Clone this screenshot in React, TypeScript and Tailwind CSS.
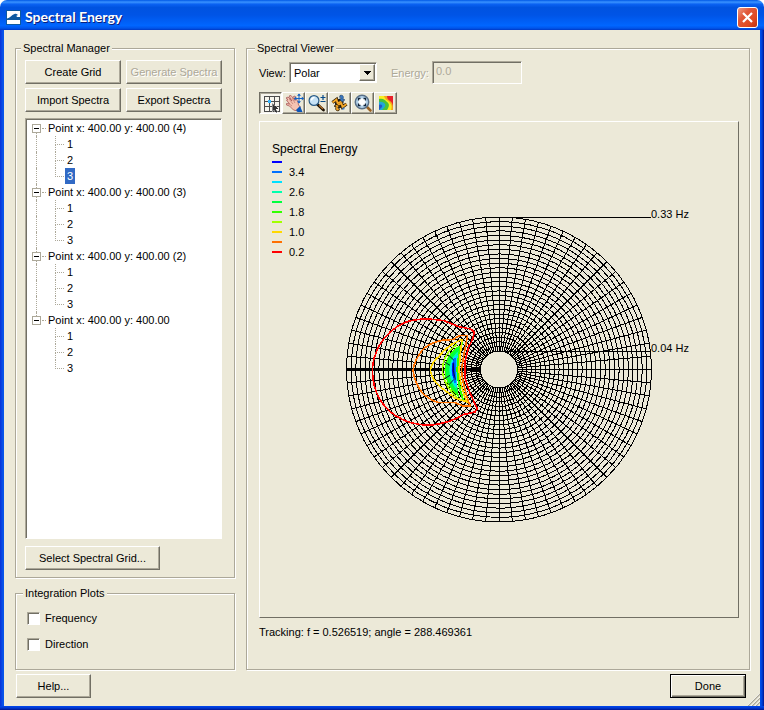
import React, { useState } from "react";

const buttonClass =
  "h-6 border border-t-white border-l-white border-r-[#716f64] border-b-[#716f64] bg-[#ece9d8] shadow-[inset_-1px_-1px_0_#aca899] text-[11px] leading-4 text-black";

const groupClass =
  "min-w-0 border border-[#aca899] shadow-[1px_1px_0_#fff,inset_1px_1px_0_#fff]";

const legendClass = "-ml-1 h-4 bg-[#ece9d8] px-0.5 text-[11px] leading-4";

const sunkenClass =
  "border border-t-[#aca899] border-l-[#aca899] border-r-white border-b-white shadow-[inset_1px_1px_0_#716f64]";

const toolClass =
  "flex h-[22px] w-[23px] items-center justify-center border";

/* ---------- Tree ---------- */

const points = [
  "Point x: 400.00 y: 400.00 (4)",
  "Point x: 400.00 y: 400.00 (3)",
  "Point x: 400.00 y: 400.00 (2)",
  "Point x: 400.00 y: 400.00",
];

function SpectraTree() {
  const [selected, setSelected] = useState("0-3");
  return (
    <ul className={`flex-1 bg-white p-px pb-2 text-[11px] leading-4 ${sunkenClass}`}>
      {points.map((label, i) => {
        const lastPoint = i === points.length - 1;
        return (
          <li key={label}>
            <div className="flex h-4 items-center pl-[5px]">
              <span className="flex h-4 w-[9px] flex-col items-center">
                <span className={`h-1 border-l border-dotted ${i === 0 ? "border-transparent" : "border-[#aca899]"}`} />
                <button
                  aria-label={`Collapse ${label}`}
                  className="flex size-[9px] items-center justify-center border border-[#aca899] bg-white"
                >
                  <span className="h-px w-[5px] bg-black" />
                </button>
                <span className={`h-[3px] border-l border-dotted ${lastPoint ? "border-transparent" : "border-[#aca899]"}`} />
              </span>
              <span className="mr-0.5 ml-px w-1 border-t border-dotted border-[#aca899]" />
              <span className="whitespace-nowrap">{label}</span>
            </div>
            <ul>
              {[1, 2, 3].map((n) => {
                const key = `${i}-${n}`;
                return (
                  <li key={key} className="flex h-4 pl-[9px]">
                    <span className={`w-[19px] border-l border-dotted ${lastPoint ? "border-transparent" : "border-[#aca899]"}`} />
                    <span className="mr-px flex w-[9px] flex-col">
                      <span className="h-[9px] border-b border-l border-dotted border-[#aca899]" />
                      {n < 3 && <span className="h-[7px] border-l border-dotted border-[#aca899]" />}
                    </span>
                    <button
                      onClick={() => setSelected(key)}
                      className={`h-4 px-0.5 leading-4 ${selected === key ? "bg-[#316ac5] text-white" : "text-black"}`}
                    >
                      {n}
                    </button>
                  </li>
                );
              })}
            </ul>
          </li>
        );
      })}
    </ul>
  );
}

/* ---------- Tool icons ---------- */

function GridIcon() {
  return (
    <svg viewBox="0 0 20 20" className="size-5" shapeRendering="crispEdges">
      <path d="M3.500 3v15M8.500 3v15M13.500 3v15M18.500 3v15M3 3.500h16M3 8.500h16M3 13.500h16M3 18.500h16" stroke="#4c4c4c" fill="none" />
      <rect x="7" y="7" width="3" height="3" fill="#38b6ff" />
      <path d="M11 10l7 6h-3l2 3-2 1-2-3-2 2z" fill="#333" stroke="#fff" strokeWidth=".4" />
    </svg>
  );
}

function PanIcon() {
  return (
    <svg viewBox="0 0 20 20" className="size-5">
      <path d="M2 5l2-1 4 4-3-5 2-.5 4 5-1.500-4 1.500-.5 3 6 .5 3 2 2-3 4-4-1-4-4-3-1v-1.500l3 .5-3-4 1.500-.5z" fill="#f6c3b2" stroke="#a85858" strokeWidth=".8" />
      <path d="M5 6l4 5M8 5l3 5M4 10l4 3" stroke="#c07a70" strokeWidth=".7" />
      <path d="M12 17l4-4 2.500 6h-5z" fill="#0a54b8" />
      <path d="M15 1v9M10.500 5.500h9" stroke="#1463c4" strokeWidth="1" />
      <path d="M15 0.500l2 2.200h-4zM15 10.500l2-2.200h-4zM10 5.500l2.200-2v4zM20 5.500l-2.200-2v4z" fill="#1463c4" />
    </svg>
  );
}

function ZoomIcon() {
  return (
    <svg viewBox="0 0 20 20" className="size-5">
      <path d="M10.500 11.500l6 5.500" stroke="#1d1205" strokeWidth="2.800" strokeLinecap="round" />
      <path d="M12 12.200l4 3.800" stroke="#b9722a" strokeWidth="1.200" />
      <circle cx="7" cy="7.500" r="4.900" fill="#c6e2f6" stroke="#2a5a85" strokeWidth="1.200" />
      <path d="M4.500 7.500a3 3 0 0 1 3-3" stroke="#fff" strokeWidth="1.600" fill="none" />
      <path d="M13.500 4.500h5M16 2v5M13.500 8.500h5" stroke="#064a8c" strokeWidth="1.200" />
    </svg>
  );
}

function RotateIcon() {
  return (
    <svg viewBox="0 0 20 20" className="size-5">
      <circle cx="9.500" cy="10.500" r="4.500" fill="#111" />
      <path d="M6 9l4 4M10 7l4 4" stroke="#e7e2d0" strokeWidth="1.200" />
      <path d="M2.500 9.500l4-3 1 3.500 4-1.500M16.500 11l-4 3-1-3.500-4 1.500" stroke="#2b1b04" strokeWidth="3.400" fill="none" />
      <path d="M2.500 9.500l4-3 1 3.500 4-1.500M16.500 11l-4 3-1-3.500-4 1.500" stroke="#f7a928" strokeWidth="1.800" fill="none" />
      <path d="M10 2.500c3-1 4 1 3 4l2 .3-3 2-2.500-3H11c0-1 0-1.500-1.500-1.500z" fill="#3c78c0" stroke="#123763" strokeWidth=".6" />
      <path d="M9 17.500c-3 1-4-1-3-4l-2-.3 3-2 2.500 3H8c0 1 0 1.500 1.500 1.500z" fill="#f7a928" stroke="#2b1b04" strokeWidth=".8" />
      <path d="M12 17l3-1-2-2z" fill="#3c78c0" />
    </svg>
  );
}

function FrameIcon() {
  return (
    <svg viewBox="0 0 20 20" className="size-5">
      <path d="M13.500 13.500l4 4" stroke="#9a6224" strokeWidth="2.600" strokeLinecap="round" />
      <circle cx="9" cy="9" r="6.700" fill="#b4d2ea" stroke="#5a7088" strokeWidth="1.500" />
      <rect x="5.500" y="5.500" width="7" height="7" fill="#fff" />
      <path d="M5.500 7.500v-2h2M10.500 5.500h2v2M12.500 10.500v2h-2M7.500 12.500h-2v-2" stroke="#12263c" strokeWidth="1.300" fill="none" />
    </svg>
  );
}

function ContourIcon() {
  return (
    <svg viewBox="0 0 20 20" className="size-5">
      <rect x="3" y="3" width="14" height="14" fill="#f8ee20" />
      <path d="M8 3h9v14h-2c1-3 1-5-1-7-2-3-5-3-6-7z" fill="#f2a51c" />
      <path d="M11 3h6v12c0-4-1-6-3-7s-3-3-3-5z" fill="#e8202a" />
      <path d="M3 6c4-1 6 1 8 3 3 2 2 5 0 8H3z" fill="#49c13a" />
      <path d="M3 9c3-1 5 1 6 2 1 2-1 4-3 6H3z" fill="#21a7d8" />
      <path d="M3 12c2-1 4 0 3 2l-3 3z" fill="#2657c4" />
    </svg>
  );
}

const tools: [string, () => React.JSX.Element][] = [
  ["Select grid point", GridIcon],
  ["Pan", PanIcon],
  ["Zoom", ZoomIcon],
  ["Rotate", RotateIcon],
  ["Frame", FrameIcon],
  ["Contours", ContourIcon],
];

/* ---------- Polar plot ---------- */

const levels = ["#0000ff", "#0070ff", "#00e0ff", "#00ffae", "#00ff3e", "#32ff00", "#a2ff00", "#ffd800", "#ff7000", "#ff0000"];
const levelLabels = ["3.4", "2.6", "1.8", "1.0", "0.2"];

const CX = 499;
const CY = 369.5;
const INNER = 18.5;
const OUTER = 152.5;

const rings = Array.from({ length: 30 }, (_, i) => INNER + ((OUTER - INNER) * i) / 29);
const spokes = Array.from({ length: 72 }, (_, i) => {
  const a = (i * 5 * Math.PI) / 180;
  const c = Math.cos(a);
  const s = Math.sin(a);
  return `M${CX + INNER * c} ${CY + INNER * s}L${CX + OUTER * c} ${CY + OUTER * s}`;
}).join("");

function PolarPlot() {
  return (
    <svg
      viewBox="260 122 478 495"
      className="min-h-0 w-full flex-1"
      fontFamily='"Liberation Sans", Arial, sans-serif'
      role="img"
      aria-label="Polar plot of spectral energy"
    >
      <text x="272" y="153" fontSize="12">Spectral Energy</text>
      {levels.map((c, i) => (
        <rect key={c} x="272" y={161 + i * 10} width="10" height="2" fill={c} />
      ))}
      {levelLabels.map((t, i) => (
        <text key={t} x="289" y={176 + i * 20} fontSize="11">{t}</text>
      ))}
      <g fill="none" stroke="#000" strokeWidth="1" shapeRendering="crispEdges">
        {rings.map((r) => (
          <circle key={r} cx={CX} cy={CY} r={r} />
        ))}
        <path d={spokes} />
        <path d="M499 217.500H651M499 351.500H651" />
        <path d="M347 369.500H480" strokeWidth="3" />
      </g>
      <g transform="translate(360 310) scale(.33333)" fill="none" strokeLinejoin="round" shapeRendering="crispEdges">
        <path d="M290 104Q250 130 247 180Q251 230 298 268" stroke="#a2ff00" strokeWidth="5" />
        <path d="M292 112Q257 140 255 181Q258 228 295 258Q283 215 285 180T301 110Z" fill="#00ff3e" stroke="#32ff00" strokeWidth="4" />
        <path d="M289 127Q266 150 266 182Q268 222 293 243Q284 212 285 180T299 121Z" fill="#00ffae" stroke="#00ff3e" strokeWidth="3" />
        <path d="M287 140Q271 158 271 182Q273 209 290 230Q286 205 289 180T294 138Z" fill="#00e0ff" stroke="#00e0ff" strokeWidth="4" />
        <path d="M283 147Q271 180 286 217Q287 180 287 147Z" fill="#0070ff" stroke="#0070ff" strokeWidth="5" />
        <path d="M279 158Q274 180 281 203Q284 181 281 158Z" fill="#0000ff" stroke="#0000ff" strokeWidth="3" />
        <path d="M280 160V181L286 209M265 135L281 150M266 225L282 208M252 155L270 166M252 207L270 196" stroke="#001830" strokeWidth="3" />
        <path d="M307 96Q293 138 292 180Q294 225 310 271" stroke="#32ff00" strokeWidth="6" />
        <path d="M211 181Q215 156 238 138Q250 122 275 103L306 88Q300 135 297 180Q301 232 321 276L285 264Q260 245 240 230Q216 210 211 181Z" stroke="#ffd800" strokeWidth="5" />
        <path d="M159 181Q163 151 188 119Q210 98 247 91L280 88L298 77L323 76Q313 125 304 180Q310 235 331 289L307 287L285 278H235Q205 268 184 245Q163 215 159 181Z" stroke="#ff7000" strokeWidth="5" />
        <path d="M37 180Q38 142 60 103Q87 59 133 38Q180 20 252 32L300 51L332 57L343 66Q339 91 327 108L316 151V207L329 247L352 296L345 306L309 314Q267 341 207 346Q147 344 107 317Q39 273 37 180Z" stroke="#ff0000" strokeWidth="5" />
      </g>
      <text x="651" y="218" fontSize="11">0.33 Hz</text>
      <text x="651" y="352" fontSize="11">0.04 Hz</text>
    </svg>
  );
}

/* ---------- Window ---------- */

function TitleBar() {
  return (
    <header className="flex h-[30px] shrink-0 items-center rounded-t-[7px] bg-[linear-gradient(#0058e6_0%,#3a93ff_7%,#0a62f2_14%,#0053e0_25%,#0054e6_50%,#0066ff_85%,#0055ea_94%,#0038c4_100%)] pr-1.5 pl-1.5">
      <svg viewBox="0 0 15 15" className="mt-1 size-[15px]">
        <rect width="15" height="15" fill="#0e5aa0" />
        <rect x="1" y="1" width="13" height="13" fill="#fff" />
        <path d="M1 8.500C4 8 5.500 5 8.500 4c2-.6 3 .3 3.500 1.500-1.500-.5-2 .5-1 1.500H14v3H1z" fill="#0e5aa0" />
      </svg>
      <h1 className="mt-1 ml-1 flex-1 font-[Lato,'Open_Sans',sans-serif] text-[14px] leading-5 font-bold text-white [text-shadow:1px_1px_0_#0a1f7c]">
        Spectral Energy
      </h1>
      <button
        aria-label="Close"
        className="mt-1 flex size-[21px] items-center justify-center rounded-[3px] border border-white bg-[linear-gradient(135deg,#ef9a82_0%,#e0583a_35%,#e04a22_70%,#b93010_100%)]"
      >
        <svg viewBox="0 0 11 11" className="size-[11px]">
          <path d="M1 1l9 9M10 1l-9 9" stroke="#fff" strokeWidth="2.200" />
        </svg>
      </button>
    </header>
  );
}

export default function App() {
  const [activeTool, setActiveTool] = useState(0);
  return (
    <div className="flex min-h-screen flex-col bg-white font-['Liberation_Sans',Arial,sans-serif] text-[11px] leading-4 text-black">
      <TitleBar />
      <div className="flex flex-1 flex-col bg-[linear-gradient(90deg,#0831d9_0,#0855ea_3px,#0855ea_4px,#0050ee_calc(100%-4px),#0040d8_calc(100%-2px),#001590_100%)] px-1">
        <main className="relative flex flex-1 flex-col bg-[#ece9d8] pt-[10px] pr-2.5 pb-2 pl-[11px]">
          <div className="flex flex-1 gap-[11px]">
            <div className="flex w-[220px] shrink-0 flex-col gap-[7px]">
              <fieldset className={`${groupClass} flex flex-1 flex-col px-[9px] pb-[7px]`}>
                <legend className={legendClass}>Spectral Manager</legend>
                <div className="mt-1 mb-1.5 grid grid-cols-2 gap-x-[5px] gap-y-1 pr-[3px]">
                  <button className={buttonClass}>Create Grid</button>
                  <button disabled className={`${buttonClass} whitespace-nowrap`}>
                    <span className="text-[#aca899] [text-shadow:1px_1px_0_#fff]">Generate Spectra</span>
                  </button>
                  <button className={buttonClass}>Import Spectra</button>
                  <button className={buttonClass}>Export Spectra</button>
                </div>
                <div className="flex flex-1 flex-col pr-[3px]">
                  <SpectraTree />
                </div>
                <button className={`${buttonClass} mt-[7px] w-[135px]`}>Select Spectral Grid...</button>
              </fieldset>
              <fieldset className={`${groupClass} flex flex-col gap-2.5 px-[11px] pt-[9px] pb-[17px]`}>
                <legend className={legendClass}>Integration Plots</legend>
                {["Frequency", "Direction"].map((t) => (
                  <label key={t} className="flex h-4 items-center gap-[5px]">
                    <input type="checkbox" className={`size-[13px] appearance-none bg-white checked:bg-[#316ac5] ${sunkenClass}`} />
                    {t}
                  </label>
                ))}
              </fieldset>
            </div>

            <fieldset className={`${groupClass} flex flex-1 flex-col pr-2.5 pb-[29px] pl-3`}>
              <legend className={legendClass}>Spectral Viewer</legend>
              <div className="mt-[5px] flex items-center">
                <label htmlFor="view" className="w-[30px]">View:</label>
                <div className="relative h-[21px] w-[88px]">
                  <select
                    id="view"
                    defaultValue="Polar"
                    className={`h-full w-full appearance-none bg-white pl-1 text-[11px] leading-4 ${sunkenClass}`}
                  >
                    <option>Polar</option>
                    <option>Cartesian</option>
                  </select>
                  <span className="pointer-events-none absolute top-0.5 right-0.5 flex h-[17px] w-4 items-center justify-center border border-t-white border-l-white border-r-[#716f64] border-b-[#716f64] bg-[#ece9d8] shadow-[inset_-1px_-1px_0_#aca899]">
                    <svg viewBox="0 0 7 4" className="h-1 w-[7px]" shapeRendering="crispEdges">
                      <path d="M0 0h7L3.500 4z" />
                    </svg>
                  </span>
                </div>
                <label htmlFor="energy" className="ml-[14px] w-[41px] text-[#aca899] [text-shadow:1px_1px_0_#fff]">Energy:</label>
                <input
                  id="energy"
                  disabled
                  defaultValue="0.0"
                  className={`h-[23px] w-[90px] bg-[#ece9d8] pb-1 pl-[3px] text-[11px] text-[#aca899] ${sunkenClass}`}
                />
              </div>
              <div className="mt-2 flex">
                {tools.map(([name, Icon], i) => (
                  <button
                    key={name}
                    aria-label={name}
                    onClick={() => setActiveTool(i)}
                    className={
                      activeTool === i
                        ? `${toolClass} border-t-[#716f64] border-l-[#716f64] border-r-white border-b-white bg-[#f6f4ec] shadow-[inset_1px_1px_0_#aca899]`
                        : `${toolClass} border-t-white border-l-white border-r-[#716f64] border-b-[#716f64] shadow-[inset_-1px_-1px_0_#aca899]`
                    }
                  >
                    <Icon />
                  </button>
                ))}
              </div>
              <div className="mt-[7px] flex flex-1 flex-col border border-t-white border-l-white border-r-[#716f64] border-b-[#716f64]">
                <PolarPlot />
              </div>
              <output className="mt-1.5 block">Tracking: f = 0.526519; angle = 288.469361</output>
            </fieldset>
          </div>

          <footer className="mt-1 flex justify-between pr-1 pl-px">
            <button className={`${buttonClass} w-[75px]`}>Help...</button>
            <button className="h-6 w-[76px] border border-black bg-[#ece9d8] shadow-[inset_1px_1px_0_#fff,inset_-1px_-1px_0_#716f64,inset_-2px_-2px_0_#aca899]">
              Done
            </button>
          </footer>
          <svg viewBox="0 0 12 12" className="absolute right-0 bottom-0 size-3">
            <path d="M0 12L12 0M4 12l8-8M8 12l4-4" stroke="#aca899" strokeWidth="1.500" />
            <path d="M-1 12L11 0M3 12l9-9M7 12l5-5" stroke="#fff" strokeWidth=".7" />
          </svg>
        </main>
      </div>
      <div className="h-1 shrink-0 bg-[linear-gradient(#0048f0,#0038d0_50%,#001590)]" />
    </div>
  );
}
